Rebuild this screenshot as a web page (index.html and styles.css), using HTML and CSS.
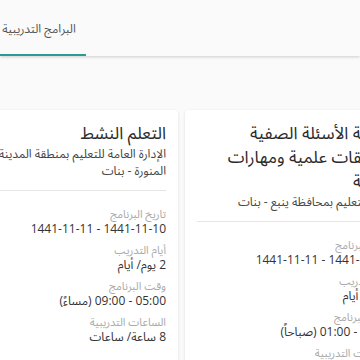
FILE: index.html
```html
<!DOCTYPE html>
<html lang="ar">
<head>
    <meta charset="utf-8">
    <title>البرامج التدريبية</title>
    <link rel="stylesheet" href="styles.css">
</head>
<body>

    <div class="tabs">
        <a class="tab active" href="#">البرامج التدريبية</a>
    </div>

    <div class="cards">
        <div class="card">
            <div class="card-head">
                <h3>أهمية الأسئلة الصفية تطبيقات علمية ومهارات عملية</h3>
                <p>إدارة التعليم بمحافظة ينبع - بنات</p>
            </div>
            <div class="card-body">
                <div class="field">
                    <span class="label">تاريخ البرنامج</span>
                    <span class="value">1441-11-10 - 1441-11-11</span>
                </div>
                <div class="field">
                    <span class="label">أيام التدريب</span>
                    <span class="value">2 يوم/ أيام</span>
                </div>
                <div class="field">
                    <span class="label">وقت البرنامج</span>
                    <span class="value">09:00 - 01:00 (صباحاً)</span>
                </div>
                <div class="field">
                    <span class="label">الساعات التدريبية</span>
                    <span class="value">8 ساعة/ ساعات</span>
                </div>
            </div>
        </div>

        <div class="card">
            <div class="card-head">
                <h3>التعلم النشط</h3>
                <p>الإدارة العامة للتعليم بمنطقة المدينة المنورة - بنات</p>
            </div>
            <div class="card-body">
                <div class="field">
                    <span class="label">تاريخ البرنامج</span>
                    <span class="value">1441-11-10 - 1441-11-11</span>
                </div>
                <div class="field">
                    <span class="label">أيام التدريب</span>
                    <span class="value">2 يوم/ أيام</span>
                </div>
                <div class="field">
                    <span class="label">وقت البرنامج</span>
                    <span class="value">05:00 - 09:00 (مساءً)</span>
                </div>
                <div class="field">
                    <span class="label">الساعات التدريبية</span>
                    <span class="value">8 ساعة/ ساعات</span>
                </div>
            </div>
        </div>
    </div>

</body>
</html>
```

FILE: styles.css
```css
body {
    font-family: "Open Sans", "Noto Sans Arabic", "DejaVu Sans", sans-serif;
    background-color: #fafafa;
    margin: 0;
    padding: 0;
    overflow: hidden;
}

.tabs {
    display: flex;
    height: 56px;
    background-color: #fafafa;
    box-shadow: 0 1px 3px rgba(0, 0, 0, 0.18);
}

.tab {
    width: 86px;
    display: flex;
    align-items: center;
    justify-content: center;
    box-sizing: border-box;
    padding: 4px 8px 0 0;
    font-size: 12px;
    color: #555;
    text-decoration: none;
}

.tab.active {
    border-bottom: 2px solid #2a9a93;
}

.cards {
    direction: rtl;
    display: flex;
    justify-content: center;
    gap: 7px;
    padding: 54px 0 0 3px;
}

.card {
    flex: 0 0 218px;
    background-color: #fff;
    border-radius: 4px;
    box-shadow: 0 1px 3px rgba(0, 0, 0, 0.12);
    padding: 0 12px;
    box-sizing: border-box;
    height: 300px;
}

.card-head {
    padding: 11px 0 11px;
    border-bottom: 1px solid #e6e6e6;
}

.card-head h3 {
    margin: 0;
    font-size: 17px;
    font-weight: normal;
    line-height: 24px;
    color: #2b2b2b;
}

.card-head p {
    margin: 0;
    font-size: 12px;
    line-height: 17px;
    color: #444;
}

.card-body {
    padding-top: 16px;
}

.field {
    display: flex;
    flex-direction: column;
    margin-bottom: 7px;
}

.label {
    font-size: 11px;
    line-height: 14px;
    color: #aaa;
}

.value {
    font-size: 12px;
    line-height: 15px;
    color: #333;
}
```
